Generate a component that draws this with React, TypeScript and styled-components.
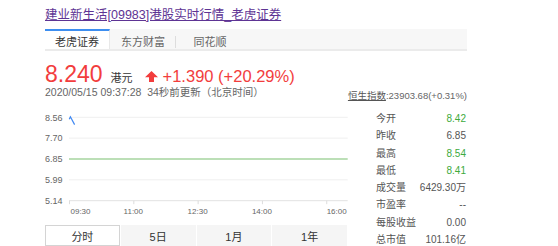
import styled, { createGlobalStyle } from "styled-components"

const GlobalStyle = createGlobalStyle`
    body {
        margin: 0;
        background: #fff;
        font-family: "Liberation Sans", "Noto Sans CJK SC", sans-serif;
    }
`

const RED = "#f23d3d"
const GREEN = "#3daa3d"

const stats = [
    { label: "今开", value: "8.42", up: true },
    { label: "昨收", value: "6.85" },
    { label: "最高", value: "8.54", up: true },
    { label: "最低", value: "8.41", up: true },
    { label: "成交量", value: "6429.30万" },
    { label: "市盈率", value: "--" },
    { label: "每股收益", value: "0.00" },
    { label: "总市值", value: "101.16亿" },
]

const sources = ["老虎证券", "东方财富", "同花顺"]
const ranges = ["分时", "5日", "1月", "1年"]

// chart geometry (svg coords)
const X0 = 24
const X1 = 302.7
const gridY = [9.3, 30.15, 51, 71.85, 92.7]
const yLabels = ["8.56", "7.70", "6.85", "5.99", "5.14"]
const times = ["09:30", "11:00", "12:30", "14:00", "16:00"]
const tickX = (i: number) => X0 + ((X1 - X0) * i * 1.5) / 6.5

const UpArrow = () => (
    <svg width="13" height="11" viewBox="0 0 13 11">
        <polygon points="6.5,0 13,6.2 9,6.2 9,11 4,11 4,6.2 0,6.2" fill={RED} />
    </svg>
)

const Chart = () => (
    <svg width="303" height="110" viewBox="0 0 303 110">
        {gridY.map((y, i) => (
            <g key={y}>
                <text x="0" y={y + 3.2} fontSize="9" fill="#666" fontFamily="Liberation Sans, sans-serif">
                    {yLabels[i]}
                </text>
                {i !== 2 && i !== 4 && <line x1={X0} x2={X1} y1={y} y2={y} stroke="#efefef" strokeWidth="1" />}
            </g>
        ))}
        <line x1={X0} x2={X1} y1={gridY[4]} y2={gridY[4]} stroke="#e2e2e2" strokeWidth="1" />
        {times.map((_, i) => (
            <line key={i} x1={tickX(i) + 0.5} x2={tickX(i) + 0.5} y1={gridY[4]} y2={gridY[4] + 3.5} stroke="#ddd" strokeWidth="1" />
        ))}
        <line x1={X0} x2={X1} y1={51} y2={51} stroke="#a6d59f" strokeWidth="1.6" />
        <path d="M24.3 11.2 L25.4 8.8 L29.6 16.6" fill="none" stroke="#3f88f2" strokeWidth="1.2" />
        {times.map((t, i) => (
            <text
                key={t}
                x={i === 0 ? X0 + 1.5 : i === 4 ? X1 - 1 : tickX(i)}
                y="105.6"
                fontSize="8"
                fill="#666"
                fontFamily="Liberation Sans, sans-serif"
                textAnchor={i === 0 ? "start" : i === 4 ? "end" : "middle"}
            >
                {t}
            </text>
        ))}
    </svg>
)

export default function App() {
    return (
        <Page>
            <GlobalStyle />
            <Title href="#">建业新生活[09983]港股实时行情_老虎证券</Title>
            <Panel>
                <SourceTabs>
                    {sources.map((s, i) => (
                        <SourceTab key={s} $active={i === 0} $sep={i === 1}>{s}</SourceTab>
                    ))}
                </SourceTabs>
                <PriceRow>
                    <Price>8.240</Price>
                    <Currency>港元</Currency>
                    <Change>
                        <UpArrow />
                        <span>+1.390 (+20.29%)</span>
                    </Change>
                </PriceRow>
                <InfoRow>
                    <span>2020/05/15 09:37:28&nbsp;&nbsp;34秒前更新（北京时间）</span>
                    <Index><u>恒生指数</u>:23903.68(+0.31%)</Index>
                </InfoRow>
                <Body>
                    <ChartColumn>
                        <Chart />
                        <RangeTabs>
                            {ranges.map((r, i) => (
                                <RangeTab key={r} $active={i === 0}>{r}</RangeTab>
                            ))}
                        </RangeTabs>
                    </ChartColumn>
                    <StatList>
                        {stats.map(s => (
                            <StatRow key={s.label}>
                                <span>{s.label}</span>
                                <StatValue $up={s.up}>{s.value}</StatValue>
                            </StatRow>
                        ))}
                    </StatList>
                </Body>
            </Panel>
        </Page>
    )
}

const Page = styled.div`
    width: 558px;
    height: 246px;
    padding-left: 45px;
    box-sizing: border-box;
    overflow: hidden;
`

const Title = styled.a`
    display: block;
    margin-top: 7px;
    font-size: 12.5px;
    line-height: 16px;
    color: #5e3494;
    text-decoration: underline;
    white-space: nowrap;
`

const Panel = styled.div`
    width: 422px;
    margin-top: 6px;
`

const SourceTabs = styled.div`
    display: flex;
    height: 20px;
    background: #f7f7f7;
    border-bottom: 2px solid #ebebeb;
`

const SourceTab = styled.div<{ $active?: boolean; $sep?: boolean }>`
    position: relative;
    width: ${p => (p.$active ? "65px" : "67px")};
    display: flex;
    align-items: center;
    justify-content: center;
    font-size: 11px;
    box-sizing: border-box;
    color: ${p => (p.$active ? "#333" : "#666")};
    background: ${p => (p.$active ? "#fff" : "transparent")};
    border-top: 2px solid ${p => (p.$active ? "#3d8ef0" : "transparent")};
    border-right: 1px solid ${p => (p.$active ? "#e8e8e8" : "transparent")};
    padding-top: ${p => (p.$active ? "1px" : "2px")};

    &::after {
        content: "";
        display: ${p => (p.$sep ? "block" : "none")};
        position: absolute;
        right: 0;
        top: 5px;
        height: 12px;
        border-right: 1px solid #ddd;
    }
`

const PriceRow = styled.div`
    display: flex;
    align-items: baseline;
    height: 24px;
    margin-top: 10px;
    line-height: 26px;
`

const Price = styled.span`
    font-size: 23px;
    color: ${RED};
`

const Currency = styled.span`
    font-size: 11px;
    color: #333;
    margin-left: 8px;
`

const Change = styled.span`
    display: flex;
    align-items: baseline;
    gap: 5px;
    margin-left: 12px;
    font-size: 16.5px;
    color: ${RED};

    svg {
        align-self: center;
        margin-top: 1px;
    }
`

const InfoRow = styled.div`
    display: flex;
    justify-content: space-between;
    font-size: 10.5px;
    line-height: 14px;
    color: #666;
`

const Index = styled.span`
    font-size: 9.5px;
    padding-top: 4px;
    color: #666;

    u {
        color: #555;
    }
`

const Body = styled.div`
    display: flex;
    margin-top: 5px;
`

const ChartColumn = styled.div`
    width: 303px;
    display: flex;
    flex-direction: column;
    svg {
        display: block;
    }
`

const RangeTabs = styled.div`
    display: grid;
    grid-template-columns: repeat(4, 1fr);
    gap: 1px;
    width: 302px;
    height: 21px;
    margin-top: 7px;
`

const RangeTab = styled.div<{ $active?: boolean }>`
    display: flex;
    align-items: center;
    justify-content: center;
    font-size: 11px;
    color: #333;
    box-sizing: border-box;
    background: ${p => (p.$active ? "#fff" : "#f5f5f5")};
    border: 1px solid ${p => (p.$active ? "#d4d4d4" : "#f5f5f5")};
`

const StatList = styled.div`
    width: 90px;
    margin-left: 28px;
    margin-top: 2px;
`

const StatRow = styled.div`
    display: flex;
    justify-content: space-between;
    height: 17.25px;
    line-height: 17.25px;
    font-size: 10px;
    color: #555;
`

const StatValue = styled.span<{ $up?: boolean }>`
    color: ${p => (p.$up ? GREEN : "#555")};
`
